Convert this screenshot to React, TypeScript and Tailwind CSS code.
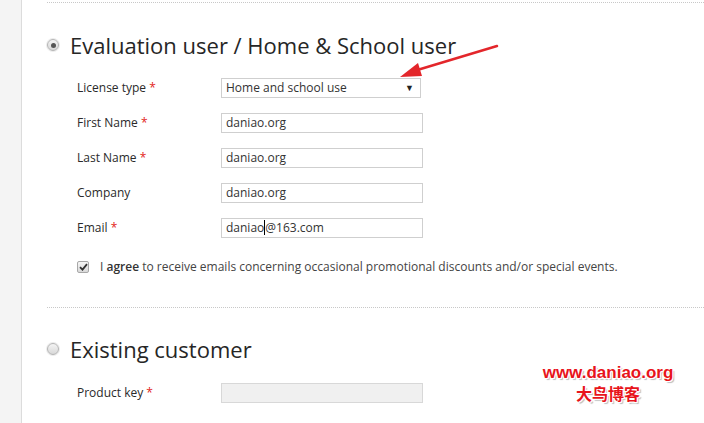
import React from "react";

const font = { fontFamily: '"Open Sans", "Noto Sans", sans-serif' };

function Radio({ checked }: { checked?: boolean }) {
  return (
    <span className="flex h-[12px] w-[12px] items-center justify-center rounded-full border border-[#b5b5b5] bg-gradient-to-b from-[#f4f4f4] to-[#d8d8d8] shadow-[0_0_0_1px_#ececec]">
      {checked && <span className="h-[5px] w-[5px] rounded-full bg-[#555]" />}
    </span>
  );
}

function Row({ label, req, children }: { label: string; req?: boolean; children: React.ReactNode }) {
  return (
    <div className="flex h-[35px] items-center">
      <div className="w-[174px] shrink-0 pl-[30px] text-[12px] text-[#2a2a2a]">
        {label}
        {req && <span className="text-[#e2231a]"> *</span>}
      </div>
      {children}
    </div>
  );
}

function Input({ value, caret }: { value: string; caret?: number }) {
  return (
    <div className="flex h-[20px] w-[202px] items-center border border-[#cfcfcf] bg-white pl-[4px] text-[12px] text-[#333]">
      {caret !== undefined ? (
        <>
          <span>{value.slice(0, caret)}</span>
          <span className="inline-block h-[15px] w-px bg-black" />
          <span>{value.slice(caret)}</span>
        </>
      ) : (
        value
      )}
    </div>
  );
}

export default function App() {
  return (
    <div className="relative flex h-[423px] w-[704px] overflow-hidden bg-white" style={font}>
      <div className="w-[22px] shrink-0 border-r border-[#dcdcdc] bg-[#f4f4f4]" />
      <div className="flex-1 pl-[25px] pt-[2px]">
        <div className="border-t border-dotted border-[#c8c8c8]" />
        <div className="pt-[26px]">
          <div className="flex h-[32px] items-center gap-[11px]">
            <Radio checked />
            <span className="text-[22px] font-medium leading-[32px] text-[#262626]">Evaluation user / Home &amp; School user</span>
          </div>
          <div className="mt-[9px]">
            <Row label="License type" req>
              <div className="relative flex h-[20px] w-[200px] items-center border border-[#cfcfcf] bg-white pl-[4px] text-[12px] text-[#333]">
                Home and school use
                <span className="absolute right-[6px] top-[2px] text-[9px] text-[#222]">▼</span>
              </div>
            </Row>
            <Row label="First Name" req>
              <Input value="daniao.org" />
            </Row>
            <Row label="Last Name" req>
              <Input value="daniao.org" />
            </Row>
            <Row label="Company">
              <Input value="daniao.org" />
            </Row>
            <Row label="Email" req>
              <Input value="daniao@163.com" caret={6} />
            </Row>
          </div>
          <div className="mt-[12px] flex h-[20px] items-center pl-[30px]">
            <span className="flex h-[12px] w-[12px] items-center justify-center rounded-[2px] border border-[#a8a8a8] bg-gradient-to-b from-[#f6f6f6] to-[#d9d9d9]">
              <svg width="9" height="8" viewBox="0 0 9 8">
                <path d="M1 4.2 L3.5 6.6 L8 1.2" fill="none" stroke="#333" strokeWidth="1.8" />
              </svg>
            </span>
            <span className="ml-[11px] text-[12px] text-[#444]">
              I <span className="font-semibold text-[#333]">agree</span> to receive emails concerning occasional promotional discounts and/or special events.
            </span>
          </div>
        </div>
        <div className="mt-[30px] border-t border-dotted border-[#c8c8c8]" />
        <div className="pt-[25px]">
          <div className="flex h-[32px] items-center gap-[11px]">
            <Radio />
            <span className="text-[22px] font-medium leading-[32px] text-[#262626]">Existing customer</span>
          </div>
          <div className="mt-[10px]">
            <Row label="Product key" req>
              <div className="h-[20px] w-[202px] border border-[#d8d8d8] bg-[#f0f0f0]" />
            </Row>
          </div>
        </div>
      </div>

      <svg className="pointer-events-none absolute left-0 top-0" width="704" height="423">
        <line x1="497" y1="46" x2="414" y2="71" stroke="#e3262b" strokeWidth="2.5" strokeLinecap="round" />
        <polygon points="400,77 418,63 422,76" fill="#e3262b" />
      </svg>

      <div
        className="absolute left-[540px] top-[364px] flex w-[136px] flex-col items-center leading-none text-[#e8141b]"
        style={{ textShadow: "1px 1px 0 #fff, -1px -1px 0 #fff, 1px -1px 0 #fff, -1px 1px 0 #fff, 2px 2px 1px #bbb" }}
      >
        <span className="text-[17px] font-bold" style={{ fontFamily: '"Liberation Sans", Arial, sans-serif' }}>
          www.daniao.org
        </span>
        <span className="mt-[4px] text-[16px] font-bold" style={{ fontFamily: '"Noto Sans CJK SC", sans-serif' }}>
          大鸟博客
        </span>
      </div>
    </div>
  );
}
